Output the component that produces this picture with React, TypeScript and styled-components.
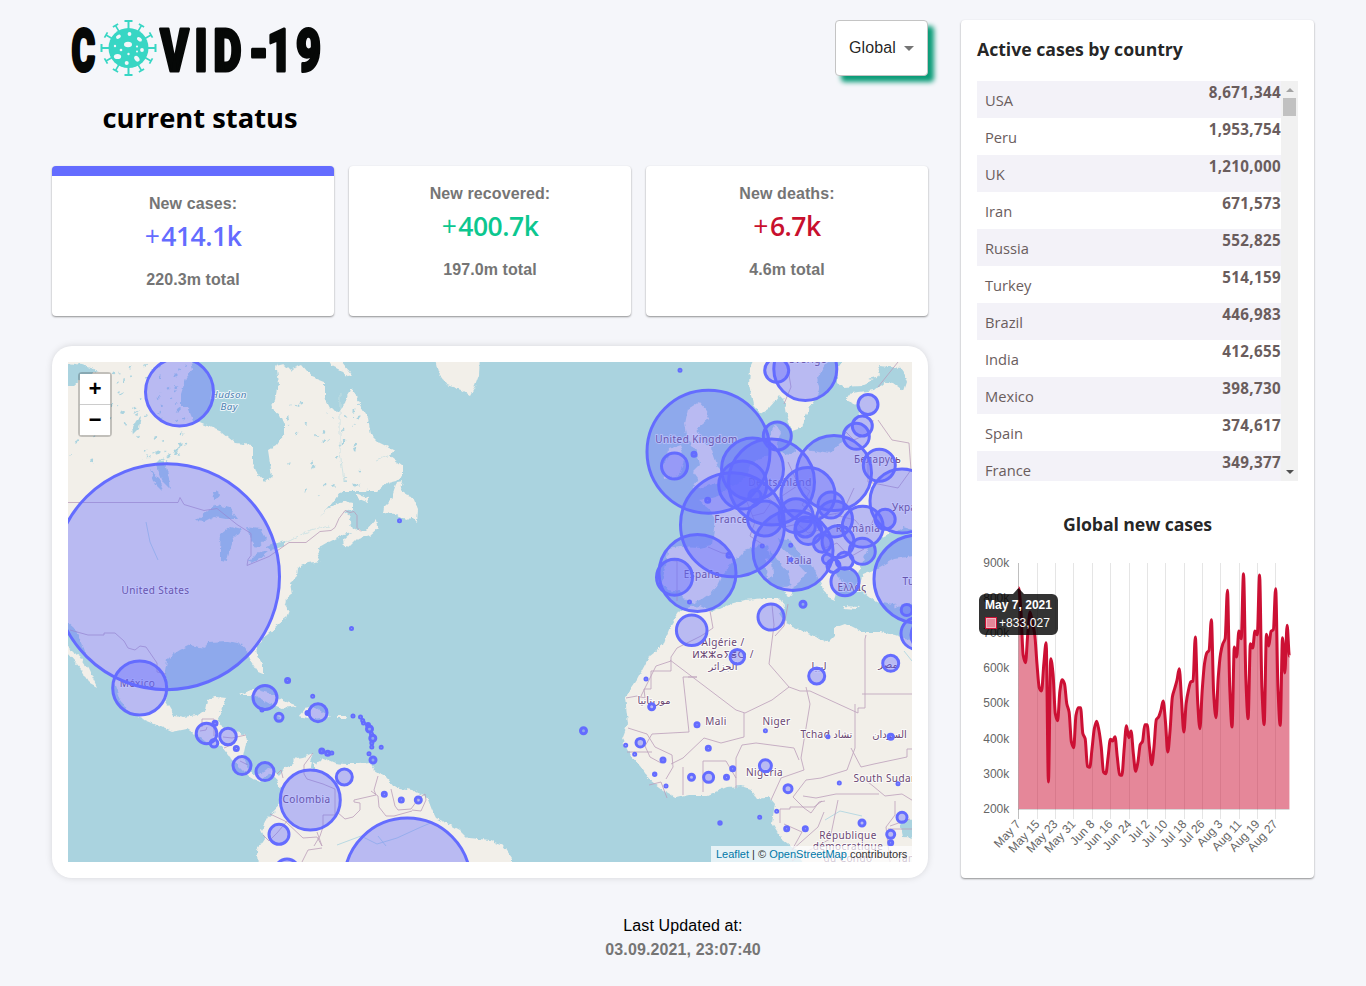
import React from "react";
import styled, { createGlobalStyle } from "styled-components";

const ACCENT = "#646cff";
const UI = '"Open Sans", "Noto Sans", sans-serif';
const SANS = '"Liberation Sans", Arial, sans-serif';

const GlobalStyle = createGlobalStyle`
  * { box-sizing: border-box; }
  body { margin: 0; background: #f5f6fa; font-family: ${SANS}; }
`;

const Page = styled.div`
  width: 1366px;
  height: 986px;
  padding: 20px 52px 0;
  overflow: hidden;
`;
const Main = styled.main`
  display: flex;
  gap: 33px;
  height: 858px;
`;
const Left = styled.section`
  width: 876px;
  display: flex;
  flex-direction: column;
`;
const Header = styled.header`
  display: flex;
  justify-content: space-between;
  align-items: flex-start;
  height: 146px;
`;
const Brand = styled.div`
  width: 296px;
`;
const LogoSvg = styled.svg`
  display: block;
  width: 256px;
  height: 60px;
  margin-left: 17px;
  overflow: visible;
`;
const Subtitle = styled.h1`
  margin: 18px 0 0;
  text-align: center;
  font: 700 27.3px/40px ${UI};
  color: #000;
`;
const Select = styled.div`
  display: flex;
  align-items: center;
  width: 93px;
  height: 56px;
  padding-left: 13px;
  background: #fff;
  border: 1px solid #c4c4c4;
  border-radius: 4px;
  box-shadow: 6px 6px 5px #0b9c78;
  font-size: 16px;
  letter-spacing: 0.1px;
  color: rgba(0, 0, 0, 0.87);
`;
const Caret = styled.span`
  margin-left: 8px;
  border: 5px solid transparent;
  border-top-color: #757575;
  border-bottom: 0;
`;
const Stats = styled.div`
  display: grid;
  grid-template-columns: repeat(3, 282px);
  gap: 15px;
`;
const StatCard = styled.article<{ $active?: boolean }>`
  height: 150px;
  border-top: ${(p) => (p.$active ? `10px solid ${ACCENT}` : "0")};
  border-radius: 4px;
  background: #fff;
  box-shadow: 0 1px 2px rgba(0, 0, 0, 0.42);
  padding-top: 16px;
  text-align: center;
`;
const StatText = styled.p`
  margin: 0;
  font: 700 16px/24px ${SANS};
  letter-spacing: 0.1px;
  color: #757575;
`;
const StatValue = styled.h2<{ $color: string }>`
  margin: 0 0 11px;
  font: 600 26.5px/41px ${UI};
  letter-spacing: -0.5px;
  color: ${(p) => p.$color};
`;
const Plus = styled.span`
  display: inline-block;
  margin-right: 2px;
  font-weight: 400;
`;
const MapCard = styled.section`
  margin-top: 30px;
  height: 532px;
  padding: 16px;
  background: #fff;
  border-radius: 20px;
  box-shadow: 0 0 8px -2px rgba(0, 0, 0, 0.22);
`;
const MapFrame = styled.div`
  position: relative;
  width: 844px;
  height: 500px;
  overflow: hidden;
`;
const MapSvg = styled.svg`
  display: block;
`;
const ZoomBar = styled.div`
  position: absolute;
  top: 10px;
  left: 10px;
  width: 34px;
  border: 2px solid rgba(0, 0, 0, 0.2);
  border-radius: 4px;
  background-clip: padding-box;
`;
const ZoomButton = styled.div`
  display: flex;
  align-items: center;
  justify-content: center;
  height: 30px;
  padding-top: 4px;
  background: #fff;
  font: 700 22px/30px "Liberation Mono", monospace;
  & + & { border-top: 1px solid #ccc; height: 31px; }
`;
const Attribution = styled.div`
  position: absolute;
  right: 0;
  bottom: 0;
  width: 201px;
  padding-left: 5px;
  background: rgba(255, 255, 255, 0.7);
  font: 11px/16px ${SANS};
  white-space: nowrap;
  color: #333;
`;
const Link = styled.span`
  color: #0078a8;
`;
const Side = styled.aside`
  width: 353px;
  padding: 16px;
  background: #fff;
  border-radius: 4px;
  box-shadow: 0 1px 2px rgba(0, 0, 0, 0.42);
`;
const SideTitle = styled.h3<{ $center?: boolean }>`
  margin: 0;
  font: 700 17.7px/26px ${UI};
  letter-spacing: ${(p) => (p.$center ? "-0.1px" : "-0.04px")};
  text-align: ${(p) => (p.$center ? "center" : "left")};
  padding-top: ${(p) => (p.$center ? "30px" : "0")};
  color: rgba(0, 0, 0, 0.87);
`;
const ListWrap = styled.div`
  display: flex;
  margin-top: 19px;
  height: 400px;
  overflow: hidden;
`;
const List = styled.div`
  flex: 1;
`;
const Row = styled.div<{ $shaded: boolean }>`
  display: flex;
  justify-content: space-between;
  height: 37px;
  padding-left: 8px;
  background: ${(p) => (p.$shaded ? "#f3f2f8" : "#fff")};
  font: 400 14.7px/22px ${UI};
  color: #6a5d5d;
`;
const Country = styled.span`
  padding-top: 8px;
`;
const Count = styled.strong`
  font-size: 15.2px;
  letter-spacing: 0.32px;
`;
const Scrollbar = styled.div`
  display: flex;
  flex-direction: column;
  align-items: center;
  width: 17px;
  background: #f1f1f1;
`;
const Arrow = styled.i<{ $down?: boolean }>`
  margin: ${(p) => (p.$down ? "auto 0 7px" : "7px 0 6px")};
  border: 4px solid transparent;
  ${(p) => (p.$down ? "border-top-color: #505050; border-bottom: 0;" : "border-bottom-color: #a3a3a3; border-top: 0;")}
`;
const Thumb = styled.div`
  width: 13px;
  height: 18px;
  background: #c1c1c1;
`;
const ChartSvg = styled.svg`
  display: block;
  margin: 11px 0 0 -1px;
  font-family: ${SANS};
`;
const Footer = styled.footer`
  padding-top: 36px;
  text-align: center;
  font: 16px/24px ${SANS};
  letter-spacing: 0.12px;
  color: #000;
`;
const Stamp = styled.div`
  font-weight: 700;
  color: #757575;
`;

const stats = [
  { label: "New cases:", value: "414.1k", total: "220.3m total", color: ACCENT, active: true },
  { label: "New recovered:", value: "400.7k", total: "197.0m total", color: "#0cc78f" },
  { label: "New deaths:", value: "6.7k", total: "4.6m total", color: "#c8102e" },
];

const countries: [string, string][] = [
  ["USA", "8,671,344"], ["Peru", "1,953,754"], ["UK", "1,210,000"], ["Iran", "671,573"],
  ["Russia", "552,825"], ["Turkey", "514,159"], ["Brazil", "446,983"], ["India", "412,655"],
  ["Mexico", "398,730"], ["Spain", "374,617"], ["France", "349,377"],
];

const spikes = Array.from({ length: 12 }, (_, i) => i * 30);

function Logo() {
  return (
    <LogoSvg viewBox="69 20 256 60">
      <g fill="#060807" stroke="#060807" strokeWidth="3.2" strokeLinejoin="round" fontFamily="Roboto, sans-serif" fontWeight="900" fontSize="60">
        <text transform="translate(71.500 70.500) scale(.6 1)">C</text>
        <text transform="translate(0 70.500) scale(.72 1)" x="222.500 270 296.500 346 371 411">VID-19</text>
      </g>
      <g stroke="#38d6c4" strokeWidth="1.7" fill="none">
        {spikes.map((a, i) => (
          <path
            key={a}
            transform={`rotate(${a} 128.5 48)`}
            d={i % 3 === 0 ? "M128.5 30V21M124.5 21h8" : "M128.5 30V22.500M125.5 22h6"}
            strokeWidth={i % 3 === 0 ? 2 : 1.700}
          />
        ))}
      </g>
      <circle cx="128.5" cy="48" r="20" fill="#38d6c4" />
      <g fill="#f5f6fa">
        <ellipse cx="128" cy="44.5" rx="4" ry="2.8" />
        <ellipse cx="118.500" cy="37" rx="2.6" ry="1.800" transform="rotate(-30 118 37)" />
        <circle cx="129.500" cy="34" r="1.900" />
        <ellipse cx="139.500" cy="39" rx="2.800" ry="1.800" transform="rotate(35 139 39)" />
        <ellipse cx="117.500" cy="56.500" rx="3.600" ry="2.600" />
        <ellipse cx="137.500" cy="58.500" rx="3.200" ry="2.300" transform="rotate(55 137 58)" />
        <circle cx="126.700" cy="63" r="2" />
        <circle cx="142" cy="50" r="1.900" />
        <circle cx="121" cy="50" r="1.300" />
        <circle cx="128.500" cy="54" r="1.200" />
        <circle cx="115" cy="46" r="1.200" />
        <circle cx="137" cy="46.500" r="1.100" />
        <circle cx="137" cy="51.500" r="1" />
      </g>
    </LogoSvg>
  );
}

// Coastlines, in the map's own pixel coordinates.
const land = [
  "60,354 279,354 278,362 276,366 284,364 290,370 302,365 312,377 325,382 325,398 330,408 337,412 345,404 350,388 353,388 358,402 368,418 371,435 378,442 394,450 390,456 402,465 402,476 396,481 388,483 378,491 342,491 336,498 328,508 318,518 306,528 320,516 330,507 345,501 353,503 353,509 345,511 351,515 349,521 352,528 358,531 366,531 376,520 378,528 370,535 358,539 350,547 344,546 343,540 352,532 343,534 336,538 328,542 321,546 317,553 320,561 308,563 298,568 297,577 290,583 292,595 284,602 289,610 286,618 275,626 275,629 262,640 256,647 257,655 263,665 263,674 258,672 250,660 247,650 242,644 228,641 208,642 205,648 190,645 180,650 172,655 167,660 165,672 167,690 165,700 170,708 174,715 183,717 198,715 205,710 207,700 215,697 226,698 223,705 218,718 219,725 224,728 236,731 245,735 246,743 243,757 248,768 253,775 260,774 268,768 274,769 280,775 285,768 292,763 297,758 303,757 313,753 310,761 317,765 321,757 335,763 345,764 360,764 370,763 375,770 385,776 395,787 412,790 427,797 432,810 436,818 447,823 460,830 468,838 490,840 503,845 512,858 512,870 258,870 257,850 265,838 261,830 268,817 276,810 281,800 282,790 276,779 268,774 260,781 250,778 240,768 232,760 222,747 210,745 197,735 187,729 172,732 150,722 130,714 120,700 112,677 98,666 86,655 75,628 60,615",
  "60,638 70,649 80,656 88,668 97,687 90,683 82,670 75,662 60,645",
  "397,482 403,481 400,492 412,496 418,510 417,522 411,516 407,520 401,518 396,514 383,513 384,507 391,500",
  "434,354 480,354 479,375 475,386 470,395 461,390 447,385 438,372",
  "325,354 342,362 352,375 350,377 340,370 332,366",
  "240,695 253,689 272,694 284,701 298,706 282,708 270,704 254,695",
  "298,716 304,709 316,707 330,717 313,719",
  "338,716 347,716 346,719 338,719", "274,716 284,717 281,719",
  "354,494 368,498 367,502 359,499", "203,355 215,360 207,366 201,362",
  "758,354 750,370 749,385 753,405 760,414 768,409 776,400 779,396 785,402 787,415 792,431 801,428 804,419 812,404 820,391 817,378 823,368 832,354",
  "846,354 837,368 837,382 843,387 861,386 878,378 887,380 875,390 851,393 846,400 861,407 857,421 848,428 841,442 830,454 812,451 797,449 789,455 780,453 777,443 781,432 776,425 769,438 770,455 758,459 750,465 745,478 735,485 728,487 718,496 708,499 698,500 711,511 715,520 712,545 700,548 680,547 668,549 667,560 662,582 668,590 680,592 690,604 702,599 715,590 722,575 735,560 745,550 760,545 769,547 778,561 788,572 791,588 802,580 806,572 793,558 782,549 778,538 789,539 801,555 812,565 820,582 828,598 835,601 837,590 845,583 835,573 848,569 858,573 862,564 868,548 884,536 900,530 920,536 920,354",
  "860,584 863,574 878,568 894,559 920,555 920,602 893,605 876,602 866,594",
  "688,409 699,402 707,411 709,419 697,429 704,443 712,450 718,467 724,473 719,483 707,486 692,489 698,479 693,472 700,465 697,451 688,440 685,424",
  "669,449 680,445 685,458 679,475 665,479 661,469 667,460",
  "782,587 794,586 791,597 781,591", "765,559 772,558 773,577 767,579", "767,546 772,546 770,556",
  "843,606 860,607 857,609 844,608", "894,606 901,603 899,608",
  "700,606 712,612 730,604 745,600 765,598 779,598 784,605 780,613 786,623 808,633 828,642 834,636 834,628 845,624 861,632 880,632 895,635 904,638 920,640 920,870 808,870 797,851 782,839 772,823 775,803 770,797 757,799 750,789 741,786 727,787 708,795 690,795 677,798 663,790 650,780 640,766 630,755 622,739 628,723 625,698 637,680 650,655 663,645 670,627 680,611 690,607",
];

const water = [
  "190,354 281,354 276,368 278,384 275,400 270,408 279,413 284,425 284,434 277,445 268,450 270,463 272,476 265,482 255,471 252,463 252,445 235,443 222,432 202,424 193,420 188,408 181,405 181,394 186,378 193,370",
  "196,521 208,510 216,505 230,508 238,519 226,519 215,517 205,522",
  "221,534 230,527 242,530 234,538 229,553 227,561 220,560 220,548",
  "245,527 261,529 266,538 257,548 252,542 249,533",
  "247,560 260,553 270,551 263,557 252,562", "265,546 285,541 285,546 271,550",
  "155,464 161,458 166,467 170,482 171,490 163,482 159,472", "150,470 156,485 163,492 159,478",
  "135,422 141,416 139,428 133,434 132,428", "213,492 218,490 219,497 214,499",
  "312,761 315,766 315,769 311,768", "900,822 920,818 920,838 903,837",
  "868,379 880,376 878,366 902,368 907,382 904,391 893,383",
  "60,362 82,365 100,371 84,376 73,386 60,386", "882,542 903,527 920,532 920,554 889,559 870,570",
];

const borders = [
  "M68 502.500H178l2-5 4 7 20 6 13-2 20 16 14 9v22l-3 4-1 6 22-9 20-14h17l14-11 11-1 4-3 4-9 6-8 5 2 4-1 3 4v12l4 4",
  "M70 630l18 5h16v-2h11l9 8 4 7 7 2 5-4 6 1 11 16v9l9 2",
  "M202 727v-8h12v17M200 731l6-1 1-3M223 737l9 1 14-3M224 748l7-3M277 774l4-4 2 8M240 761l8 4",
  "M313 753l-9 12v9l3 5 16 5 12 5v26h-12v12l-3 9-6 10M270 814l15 7 18 17 14-1 5 9-5-14M322 848l-14 2-6 12M337 812l8 7 8-2 7-7v-7l-6-1v-2l22-5-2-5 4-14M371 791l7 5 1 11 7 9 8 0 18-5M391 789l4 17 3 4 13-1 8-11 6-4 1 6-5 11-9-1M263 835l6 6 8-8 11-13",
  "M665 560l12 1v40M708 547l14 6 10 1M730 490l17 12 8 20-5 14 12 8M748 474l8 15 16 12-8 12-12 3M776 500l24-16 10 7-8 14 16 12 25-5 11-24M798 484l-10-22M844 430l10 10 17-8 2-12M878 420l14 20 17 3 2 27-13 18-30-6 0-30M784 404l7-17-4-24M878 387l20-25M765 522l19 5 14-3 10 9 15-4M820 532l5 16 12-5 13 14 14-8M835 515l20 5 12 14 10-22",
  "M710 611l3 17-12 8-24 12-6 9v14h-20l0 18-7 0 1 9-8-2-11 2M671 661l-15 5-16 32M670 660l66 50 9 3 27-13 17-13 11 4 10 0 48 22v-5h7v-69l1-4M772 605l2 20-5 39 20 23M788 604l-4 22-9 10M688 677h9l-14 0 6 55-37 2-7 12 5 11 11 6M744 713v24l-23 6-17-5-21 20-12 6M806 687l4 17-9 54 3 12-23 8-10 22M736 778v-20l6-13 14-2 38 5 5 12M683 795v-28M703 792v-31h23l10 17v10M667 798l-6-16-12 3M628 728l19 6 8 13 17 8 1 12-7 12M627 752h25M855 704v44l-8 22-26 8-15 2-13 17 11 11 7 5 8-11 6-1M862 694h50M851 748l10 19 13-3 33-7v-8l5 0M863 778l10 8 12 10 17-2 13 8M803 796l13 2 20-4h43M780 823v-14h10v-2h24l8-6M784 824l18 8-10 18 26-23 6-15M838 800l-8 39-22 12-16 10M890 826l20-7M895 801v14l-9 12 4 35M888 829h24",
];

type Dot = [number, number, number];
const dots: Dot[] = [
  [179.500, 392, 34], [166.500, 576.700, 113], [139.700, 688, 27], [206.500, 733.500, 10.300], [214, 743.300, 3.800], [215, 723.300, 2], [228, 736.500, 8.300],
  [236.300, 748.500, 2], [242, 765.600, 9], [265, 771.600, 9], [279, 717.300, 4], [265, 697.500, 12], [287.600, 680.500, 2], [262, 710, 1],
  [279, 834.300, 10], [287, 871, 12], [351.500, 628.500, 1], [312.700, 696.300, 1], [318, 712.700, 9], [307.500, 713, 1.500],
  [353, 716, 1], [360.500, 717, 1], [362.700, 720.500, 1], [363.500, 723, 1], [368, 725, 1.500], [369.500, 729, 3], [372.800, 738.300, 3],
  [371.500, 734, 1], [371.800, 743, 1], [371.800, 747, 1], [381.200, 747.300, 1], [369, 753.700, 1], [373, 760, 3], [321.800, 751, 2],
  [327.700, 753.300, 2], [331.800, 753, 1], [310.300, 800, 30], [344.300, 777, 8], [384.300, 794.300, 2], [401.300, 800, 2],
  [418.300, 800, 3], [407.300, 881, 63], [399.500, 520.700, 1], [691.700, 630.300, 15.300], [737.300, 656.700, 7.300], [646, 679, 1],
  [651.700, 706.700, 3], [697, 724.700, 2], [583.500, 730.700, 3], [640.300, 742.700, 4.300], [625.700, 745.300, 1], [634.700, 754.300, 1],
  [663, 760, 2], [708.300, 748.300, 2], [654.700, 774.300, 1.200], [666, 786, 1], [691.500, 777.300, 3], [708.600, 777.300, 5],
  [726.500, 777.300, 2], [732.700, 768.700, 2], [720, 823, 1.200], [689.500, 602, 1], [771, 617, 13], [803, 604.300, 3],
  [816.700, 676, 8], [890.700, 663.300, 8], [765.400, 730.700, 1], [828, 736.700, 1], [890.700, 736.700, 2.500], [765.400, 765.700, 6],
  [788, 788.700, 4], [839.300, 783, 1], [898, 783.700, 1], [776.700, 811.300, 1], [759.700, 817.300, 1], [786.700, 828.700, 2],
  [805.300, 828.700, 2], [862, 823, 3], [890.700, 834.300, 4], [890.700, 842.700, 2], [902, 817.300, 5], [906.700, 610, 5.500],
  [917, 633.500, 16], [927, 635, 16], [918, 579, 44], [680, 370.300, 1], [708.500, 451.700, 61.500], [674.500, 466, 13], [694, 454.300, 2],
  [707.700, 500.300, 2], [732.500, 524.700, 52], [697.500, 573, 38.500], [674.500, 577.300, 18], [729, 555.300, 2], [762.300, 546, 1],
  [742.700, 485, 24], [752.500, 469, 31], [771.500, 482, 43], [765, 518.500, 17.500], [755, 495.700, 6], [777.300, 436, 14],
  [793, 550.500, 40], [776.700, 370.300, 12], [805.300, 369, 31.500], [868, 404.500, 10], [862.300, 426, 10], [856.300, 436.300, 13],
  [834, 473, 37.500], [879.300, 465.300, 16], [902, 501, 32], [885.200, 519.300, 10], [808, 494.500, 27], [831, 505, 13], [834.500, 519, 18],
  [862.700, 526.700, 20.500], [862.300, 551.300, 13], [838, 541.700, 16], [796, 515.700, 17], [808.300, 531, 13.500], [805.300, 527, 10],
  [822.300, 543.300, 9], [827.500, 559, 5], [833.500, 566, 6.500], [844.700, 560.700, 8.500], [845, 581.700, 14], [790.700, 545.300, 1], [790.700, 559.700, 1],
];

const labels: [number, number, string][] = [
  [155.5, 594, "United States"], [137.500, 687, "México"], [306.500, 803, "Colombia"], [696.500, 443, "United Kingdom"],
  [731, 523, "France"], [702, 578, "España"], [780, 485.500, "Deutschland"], [799, 563.500, "Italia"], [852, 591, "Ελλάς"],
  [858, 532, "România"], [877.500, 462.500, "Беларусь"], [912, 511, "Україна"], [921, 585, "Türkiye"], [808, 363, "Sverige"],
  [723, 646, "Algérie /"], [723, 657.500, "ⵍⵣⵣⴰⵢⴻⵔ /"], [723, 669.500, "الجزائر"], [654, 704, "موريتانيا"], [716, 724.500, "Mali"],
  [776.500, 725, "Niger"], [826.500, 737.500, "Tchad تشاد"], [889.500, 738, "السودان"], [819, 670, "ليبيا"], [888, 668, "مصر"],
  [764.500, 776, "Nigeria"], [885.500, 782, "South Sudan"], [848, 838.500, "République"], [848, 850, "démocratique"], [848, 862, "du Congo"], [919, 862, "Tanzania"],
];

// Scattered northern lakes, laid out by a small deterministic generator.
function makeLakes() {
  let s = 7;
  const rnd = () => (s = (s * 16807) % 2147483647) / 2147483647;
  const out: { x: number; y: number; w: number; h: number }[] = [];
  for (let i = 0; i < 130; i++) {
    const west = i < 85;
    const x = west ? 70 + rnd() * 120 : 285 + rnd() * 85;
    const y = west ? 364 + rnd() * 100 : 400 + rnd() * 105;
    out.push({ x, y, w: 0.5 + rnd() * 2.200, h: 0.3 + rnd() * 1.200 });
  }
  return out;
}
const lakes = makeLakes();

function WorldMap() {
  return (
    <MapSvg width="844" height="500" viewBox="68 362 844 500">
      <defs>
        <filter id="coast" x="60" y="354" width="860" height="516" filterUnits="userSpaceOnUse">
          <feTurbulence type="fractalNoise" baseFrequency="0.16" numOctaves="3" seed="4" />
          <feDisplacementMap in="SourceGraphic" scale="5" xChannelSelector="R" yChannelSelector="G" />
        </filter>
      </defs>
      <rect x="68" y="362" width="844" height="500" fill="#aad3df" />
      <g filter="url(#coast)">
        <g fill="#f2efe9">{land.map((p) => <polygon key={p} points={p} />)}</g>
        <g fill="#aad3df">
          {water.map((p) => <polygon key={p} points={p} />)}
          {lakes.map((l, i) => <ellipse key={i} cx={l.x} cy={l.y} rx={l.w} ry={l.h} transform={`rotate(-35 ${l.x} ${l.y})`} />)}
        </g>
        <path d="M330 526l-20 4-25 12M340 392v60l4 30M376 461l14-6" fill="none" stroke="#c6dfe2" strokeWidth=".8" />
      </g>
      <path d="M337 845l24-9 16 8 20-6 24-11 12-5M378 836l8 10M146 522l4 20 8 18M904 651l8 10M825 820l15-9 22 5" fill="none" stroke="#aad3df" strokeWidth=".8" />
      <g fill="none" stroke="#b99bb8" strokeWidth=".9" opacity=".85">
        {borders.map((d) => <path key={d} d={d} />)}
      </g>
      <g fontFamily='"Noto Sans", "DejaVu Sans", sans-serif' fontSize="10" textAnchor="middle" letterSpacing=".4" paintOrder="stroke" stroke="rgba(255,255,255,.75)" strokeWidth="2" strokeLinejoin="round" fill="#6b4773">
        {labels.map(([x, y, t]) => <text key={t} x={x} y={y}>{t}</text>)}
        <g fill="#4d80b3" fontStyle="italic" fontSize="9.8">
          <text x="229" y="397.5">Hudson</text>
          <text x="229" y="409.500">Bay</text>
        </g>
      </g>
      <g fill={ACCENT} fillOpacity=".4" stroke={ACCENT} strokeWidth="3">
        {dots.map(([x, y, r], i) => <circle key={i} cx={x} cy={y} r={r} />)}
      </g>
    </MapSvg>
  );
}

// Daily new cases from May 7 to Sep 2, as depths below the top gridline in thirds of a pixel.
const raw = [262, 330, 465, 487, 400, 335, 368, 400, 490, 562, 572, 490, 427, 845, 475, 520, 640, 661, 572, 538, 550, 610, 635, 725, 742, 645, 622, 622, 700, 715, 798, 801, 745, 685, 663, 690, 740, 815, 820, 770, 717, 722, 709, 770, 823, 825, 745, 676, 712, 692, 760, 813, 785, 733, 723, 673, 673, 740, 793, 740, 658, 650, 630, 602, 665, 755, 690, 590, 565, 540, 505, 600, 695, 610, 570, 545, 542, 410, 600, 685, 570, 490, 458, 450, 358, 580, 652, 530, 460, 430, 415, 270, 560, 680, 440, 470, 392, 415, 220, 530, 655, 430, 443, 392, 403, 224, 560, 673, 402, 437, 393, 388, 265, 560, 675, 412, 518, 375, 468];
const X0 = 42.600;
const STEP = 2.295;
const pts = raw.map((v, i) => [X0 + i * STEP, (v - 188) / 3 + 15] as const);

function smooth() {
  const m = pts.map((p, i) => {
    if (i === 0 || i === pts.length - 1) return 0;
    const a = p[1] - pts[i - 1][1];
    const b = pts[i + 1][1] - p[1];
    return a * b <= 0 ? 0 : (2 * a * b) / (a + b);
  });
  return pts.slice(1).reduce((d, p, i) => {
    const q = pts[i];
    return `${d}C${q[0] + STEP / 3} ${q[1] + m[i] / 3} ${p[0] - STEP / 3} ${p[1] - m[i + 1] / 3} ${p[0]} ${p[1]}`;
  }, `M${pts[0][0]} ${pts[0][1]}`);
}
const line = smooth();
const ticks = ["May 7", "May 15", "May 23", "May 31", "Jun 8", "Jun 16", "Jun 24", "Jul 2", "Jul 10", "Jul 18", "Jul 26", "Aug 3", "Aug 11", "Aug 19", "Aug 27"];

function Chart() {
  return (
    <ChartSvg width="322" height="310" viewBox="0 0 322 310">
      <g fontSize="12" fill="#666" textAnchor="end">
        {[900, 800, 700, 600, 500, 400, 300, 200].map((v, i) => (
          <text key={v} x="33.300" y={19 + i * 35.100}>{v}k</text>
        ))}
      </g>
      {ticks.map((t, i) => {
        const x = Math.round(X0 + i * 8 * STEP - 0.2) + 0.5;
        return (
          <g key={t}>
            <path d={`M${x} 15V271`} stroke={i ? "rgba(0,0,0,.1)" : "rgba(0,0,0,.25)"} />
            <text transform={`translate(${x - 1.500} 272.500) rotate(-47)`} fontSize="12" fill="#666" textAnchor="end" y="6">{t}</text>
          </g>
        );
      })}
      <path d="M42 261.500H313.500" stroke="rgba(0,0,0,.15)" />
      <path d={`${line}V261H${X0}Z`} fill="rgba(204,16,52,.5)" />
      <path d={line} fill="none" stroke="#cc1034" strokeWidth="3" strokeLinejoin="round" />
      <path d="M9 46h28l5.500-6 5.500 6h28a6 6 0 0 1 6 6v29a6 6 0 0 1-6 6H9a6 6 0 0 1-6-6V52a6 6 0 0 1 6-6Z" fill="rgba(0,0,0,.8)" />
      <g fontSize="12" fill="#fff">
        <text x="9" y="61" fontWeight="700" textLength="67">May 7, 2021</text>
        <rect x="9.500" y="69.500" width="11" height="11" fill="#e58799" stroke="#cc1034" />
        <rect x="10.500" y="70.500" width="9" height="9" fill="none" stroke="#f2b5c0" />
        <text x="23" y="79" textLength="51">+833,027</text>
      </g>
    </ChartSvg>
  );
}

export default function App() {
  return (
    <Page>
      <GlobalStyle />
      <Main>
        <Left>
          <Header>
            <Brand>
              <Logo />
              <Subtitle>current status</Subtitle>
            </Brand>
            <Select>Global<Caret /></Select>
          </Header>
          <Stats>
            {stats.map((s) => (
              <StatCard key={s.label} $active={s.active}>
                <StatText>{s.label}</StatText>
                <StatValue $color={s.color}><Plus>+</Plus>{s.value}</StatValue>
                <StatText>{s.total}</StatText>
              </StatCard>
            ))}
          </Stats>
          <MapCard>
            <MapFrame>
              <WorldMap />
              <ZoomBar>
                <ZoomButton>+</ZoomButton>
                <ZoomButton>−</ZoomButton>
              </ZoomBar>
              <Attribution><Link>Leaflet</Link> | © <Link>OpenStreetMap</Link> contributors</Attribution>
            </MapFrame>
          </MapCard>
        </Left>
        <Side>
          <SideTitle>Active cases by country</SideTitle>
          <ListWrap>
            <List>
              {countries.map(([name, count], i) => (
                <Row key={name} $shaded={i % 2 === 0}>
                  <Country>{name}</Country>
                  <Count>{count}</Count>
                </Row>
              ))}
            </List>
            <Scrollbar><Arrow /><Thumb /><Arrow $down /></Scrollbar>
          </ListWrap>
          <SideTitle $center>Global new cases</SideTitle>
          <Chart />
        </Side>
      </Main>
      <Footer>
        <div>Last Updated at:</div>
        <Stamp>03.09.2021, 23:07:40</Stamp>
      </Footer>
    </Page>
  );
}
